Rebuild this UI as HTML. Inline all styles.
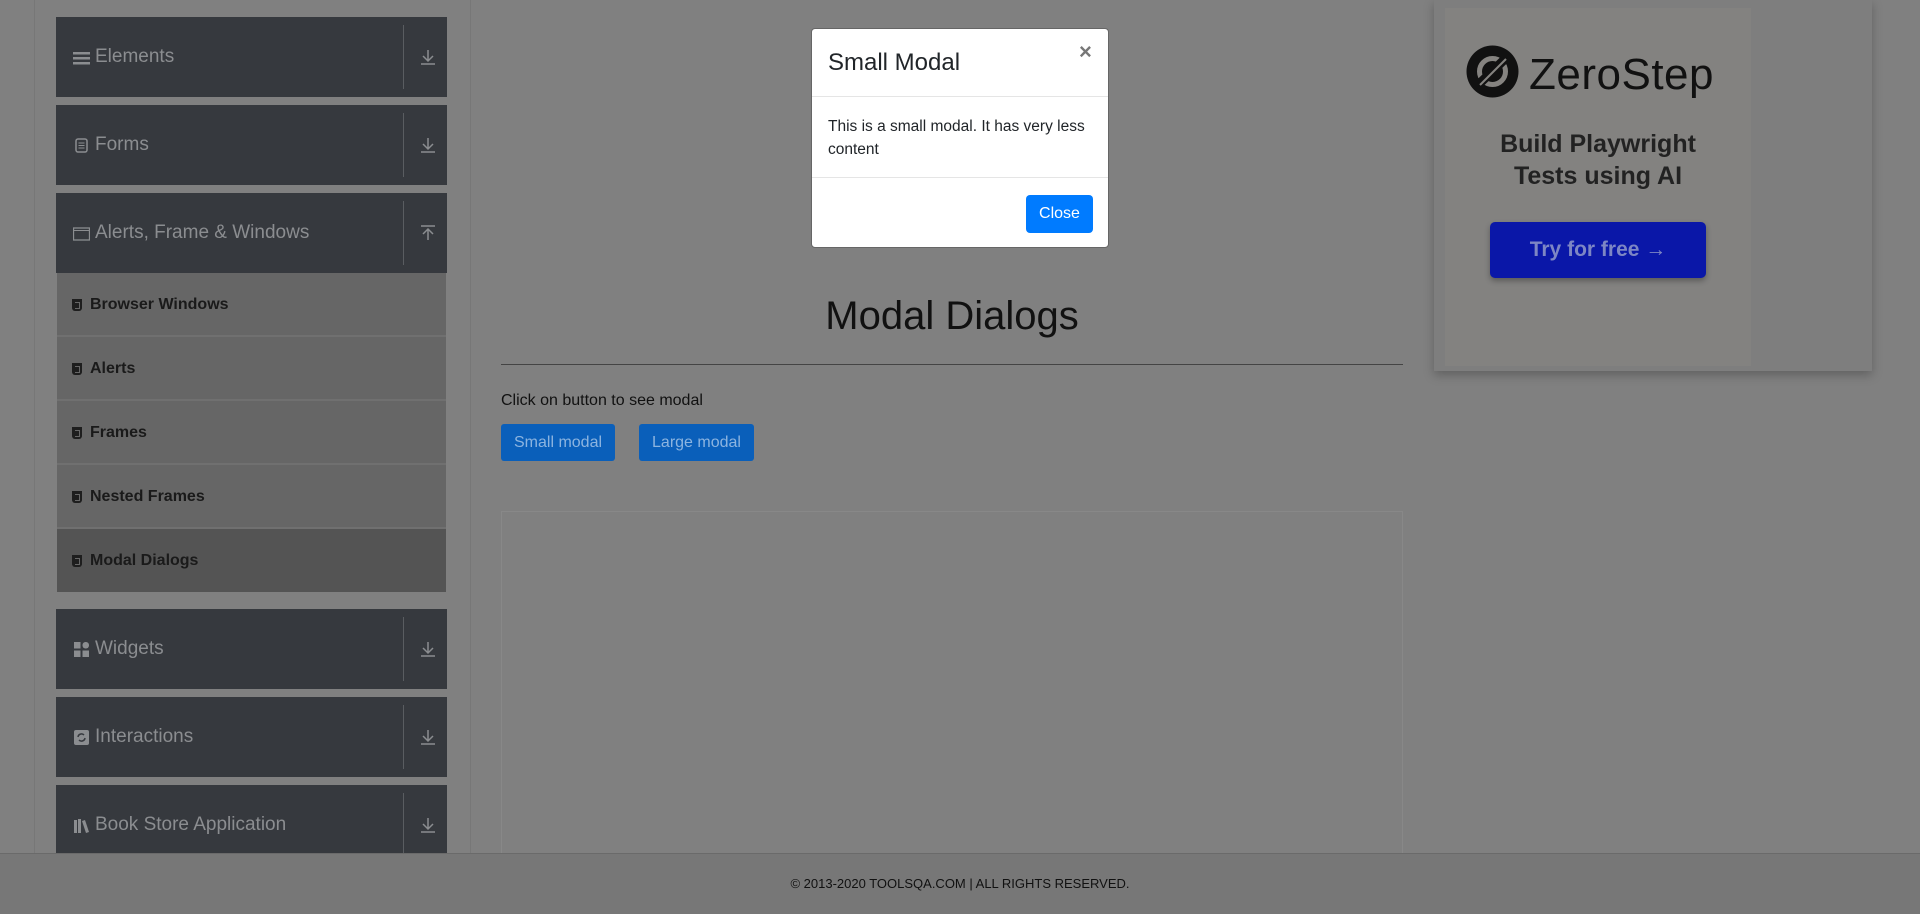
<!DOCTYPE html>
<html><head><meta charset="utf-8"><style>
*{box-sizing:border-box;margin:0;padding:0}
body{width:1920px;height:914px;background:#808080;font-family:"Liberation Sans",Arial,sans-serif;position:relative;overflow:hidden}
.a{position:absolute}
.card{position:absolute;left:56px;width:391px;height:80px;background:#36393e;color:#8b8d90;font-size:19px}
.card .t{position:absolute;left:39px;top:29px}
.card .ic{position:absolute;left:17px;top:32px;width:17px;height:17px}
.card .dv{position:absolute;left:347px;top:8px;width:1px;height:64px;background:#5a5d61}
.card .ar{position:absolute;left:364px;top:31px;width:16px;height:18px}
.sub{position:absolute;left:57px;width:389px;height:64px;background:#666;color:#1a1a1a;font-weight:bold;font-size:16px;border-bottom:2px solid #707070}
.sub span{position:absolute;left:33px;top:23px}
.sub i{position:absolute;left:15px;top:26px;width:10px;height:12px;background:#1e1e1e;border-radius:0 0 3px 3px}
.sub i:after{content:"";position:absolute;left:3px;top:3px;width:4px;height:5px;border:1px solid #666;border-left:none}
</style></head><body>
<div class="a" style="left:34px;top:0;width:1px;height:853px;background:#777"></div>
<div class="a" style="left:470px;top:0;width:1px;height:853px;background:#777"></div>

<div class="card" style="top:17px"><svg class="ic" viewBox="0 0 17 17"><rect x="0" y="3" width="17" height="2.5" fill="#8b8d90"/><rect x="0" y="8" width="17" height="2.5" fill="#8b8d90"/><rect x="0" y="13" width="17" height="2.5" fill="#8b8d90"/></svg><span class="t">Elements</span><div class="dv"></div><svg class="ar" viewBox="0 0 16 18"><path d="M8 2v11M3 8l5 5 5-5M1 16h14" stroke="#8b8d90" stroke-width="1.5" fill="none"/></svg></div>
<div class="card" style="top:105px"><svg class="ic" viewBox="0 0 17 17"><rect x="3" y="2" width="11" height="13" rx="2" fill="none" stroke="#8b8d90" stroke-width="1.5"/><path d="M5.5 6h6M5.5 8.5h6M5.5 11h6" stroke="#8b8d90"/></svg><span class="t">Forms</span><div class="dv"></div><svg class="ar" viewBox="0 0 16 18"><path d="M8 2v11M3 8l5 5 5-5M1 16h14" stroke="#8b8d90" stroke-width="1.5" fill="none"/></svg></div>
<div class="card" style="top:193px"><svg class="ic" viewBox="0 0 17 17"><rect x="0.5" y="3" width="16" height="12" fill="none" stroke="#8b8d90" stroke-width="1.3"/><path d="M0.5 5.5h16" stroke="#8b8d90"/></svg><span class="t">Alerts, Frame &amp; Windows</span><div class="dv"></div><svg class="ar" viewBox="0 0 16 18"><path d="M8 16V5M3 10l5-5 5 5M1 2h14" stroke="#8b8d90" stroke-width="1.5" fill="none"/></svg></div>

<div class="sub" style="top:273px"><i></i><span>Browser Windows</span></div>
<div class="sub" style="top:337px"><i></i><span>Alerts</span></div>
<div class="sub" style="top:401px"><i></i><span>Frames</span></div>
<div class="sub" style="top:465px"><i></i><span>Nested Frames</span></div>
<div class="sub" style="top:529px;background:#545454;height:63px;border-bottom:none"><i></i><span>Modal Dialogs</span></div>

<div class="card" style="top:609px"><svg class="ic" viewBox="0 0 17 17"><rect x="1" y="1" width="6.5" height="6.5" fill="#8b8d90"/><rect x="9.5" y="1" width="6.5" height="6.5" rx="3" fill="#8b8d90"/><rect x="1" y="9.5" width="6.5" height="6.5" fill="#8b8d90"/><rect x="9.5" y="9.5" width="6.5" height="6.5" fill="#8b8d90"/></svg><span class="t">Widgets</span><div class="dv"></div><svg class="ar" viewBox="0 0 16 18"><path d="M8 2v11M3 8l5 5 5-5M1 16h14" stroke="#8b8d90" stroke-width="1.5" fill="none"/></svg></div>
<div class="card" style="top:697px"><svg class="ic" viewBox="0 0 17 17"><rect x="1" y="1" width="15" height="15" rx="2" fill="#8b8d90"/><path d="M5 8a3.5 3.5 0 0 1 6-2M12 9a3.5 3.5 0 0 1-6 2" stroke="#36393e" stroke-width="1.5" fill="none"/></svg><span class="t">Interactions</span><div class="dv"></div><svg class="ar" viewBox="0 0 16 18"><path d="M8 2v11M3 8l5 5 5-5M1 16h14" stroke="#8b8d90" stroke-width="1.5" fill="none"/></svg></div>
<div class="card" style="top:785px"><svg class="ic" viewBox="0 0 17 17"><path d="M1 3h3v13H1zM5 2h3v14H5zM9 4l3-1 4 12-3 1z" fill="#8b8d90"/></svg><span class="t">Book Store Application</span><div class="dv"></div><svg class="ar" viewBox="0 0 16 18"><path d="M8 2v11M3 8l5 5 5-5M1 16h14" stroke="#8b8d90" stroke-width="1.5" fill="none"/></svg></div>

<div class="a" style="left:501px;top:294px;width:902px;text-align:center;font-size:40px;color:#111">Modal Dialogs</div>
<div class="a" style="left:501px;top:364px;width:902px;height:1px;background:#444"></div>
<div class="a" style="left:501px;top:392px;font-size:16px;color:#111">Click on button to see modal</div>
<div class="a" style="left:501px;top:424px;width:114px;height:37px;background:#0a5fba;border-radius:3px;color:#8cb4e0;font-size:16px;text-align:center;line-height:37px">Small modal</div>
<div class="a" style="left:639px;top:424px;width:115px;height:37px;background:#0a5fba;border-radius:3px;color:#8cb4e0;font-size:16px;text-align:center;line-height:37px">Large modal</div>
<div class="a" style="left:501px;top:511px;width:902px;height:360px;border:1px solid #888;border-bottom:none"></div>

<div class="a" style="left:1434px;top:0;width:438px;height:371px;background:#7e7e7e;box-shadow:0 4px 10px rgba(0,0,0,.25)"></div>
<div class="a" style="left:1445px;top:8px;width:306px;height:358px;background:#838280"></div>
<svg class="a" style="left:1466px;top:45px" width="53" height="53" viewBox="0 0 53 53"><circle cx="26.5" cy="26.5" r="26" fill="#111"/><circle cx="26.5" cy="26.5" r="13" fill="none" stroke="#858380" stroke-width="5"/><path d="M12 40L41 12" stroke="#111" stroke-width="9"/><path d="M14 40L40 14" stroke="#858380" stroke-width="2"/></svg>
<div class="a" style="left:1529px;top:50px;font-size:44px;color:#111;letter-spacing:0.5px">ZeroStep</div>
<div class="a" style="left:1445px;top:128px;width:306px;text-align:center;font-size:25px;font-weight:bold;color:#222;line-height:32px">Build Playwright<br>Tests using AI</div>
<div class="a" style="left:1490px;top:222px;width:216px;height:56px;background:#0a17a8;border-radius:5px;color:#7d86c4;font-weight:bold;font-size:21px;text-align:center;line-height:56px;box-shadow:0 3px 6px rgba(0,0,0,.3)">Try for free →</div>

<div class="a" style="left:0;top:853px;width:1920px;height:61px;background:#777;border-top:1px solid #6a6a6a"></div>
<div class="a" style="left:0;top:876px;width:1920px;text-align:center;font-size:13px;color:#111">© 2013-2020 TOOLSQA.COM | ALL RIGHTS RESERVED.</div>

<div class="a" style="left:811px;top:28px;width:298px;height:220px;background:#fff;border-radius:4px;border:1px solid #666">
<div class="a" style="left:16px;top:20px;font-size:24px;color:#212529">Small Modal</div>
<div class="a" style="left:267px;top:10px;font-size:22px;font-weight:bold;color:#777">×</div>
<div class="a" style="left:0;top:67px;width:296px;height:1px;background:#e5e5e5"></div>
<div class="a" style="left:16px;top:86px;width:275px;font-size:15.5px;line-height:23px;color:#212529">This is a small modal. It has very less content</div>
<div class="a" style="left:0;top:148px;width:296px;height:1px;background:#e5e5e5"></div>
<div class="a" style="left:214px;top:166px;width:67px;height:38px;background:#007bff;border-radius:4px;color:#fff;font-size:16px;text-align:center;line-height:38px">Close</div>
</div>
</body></html>
